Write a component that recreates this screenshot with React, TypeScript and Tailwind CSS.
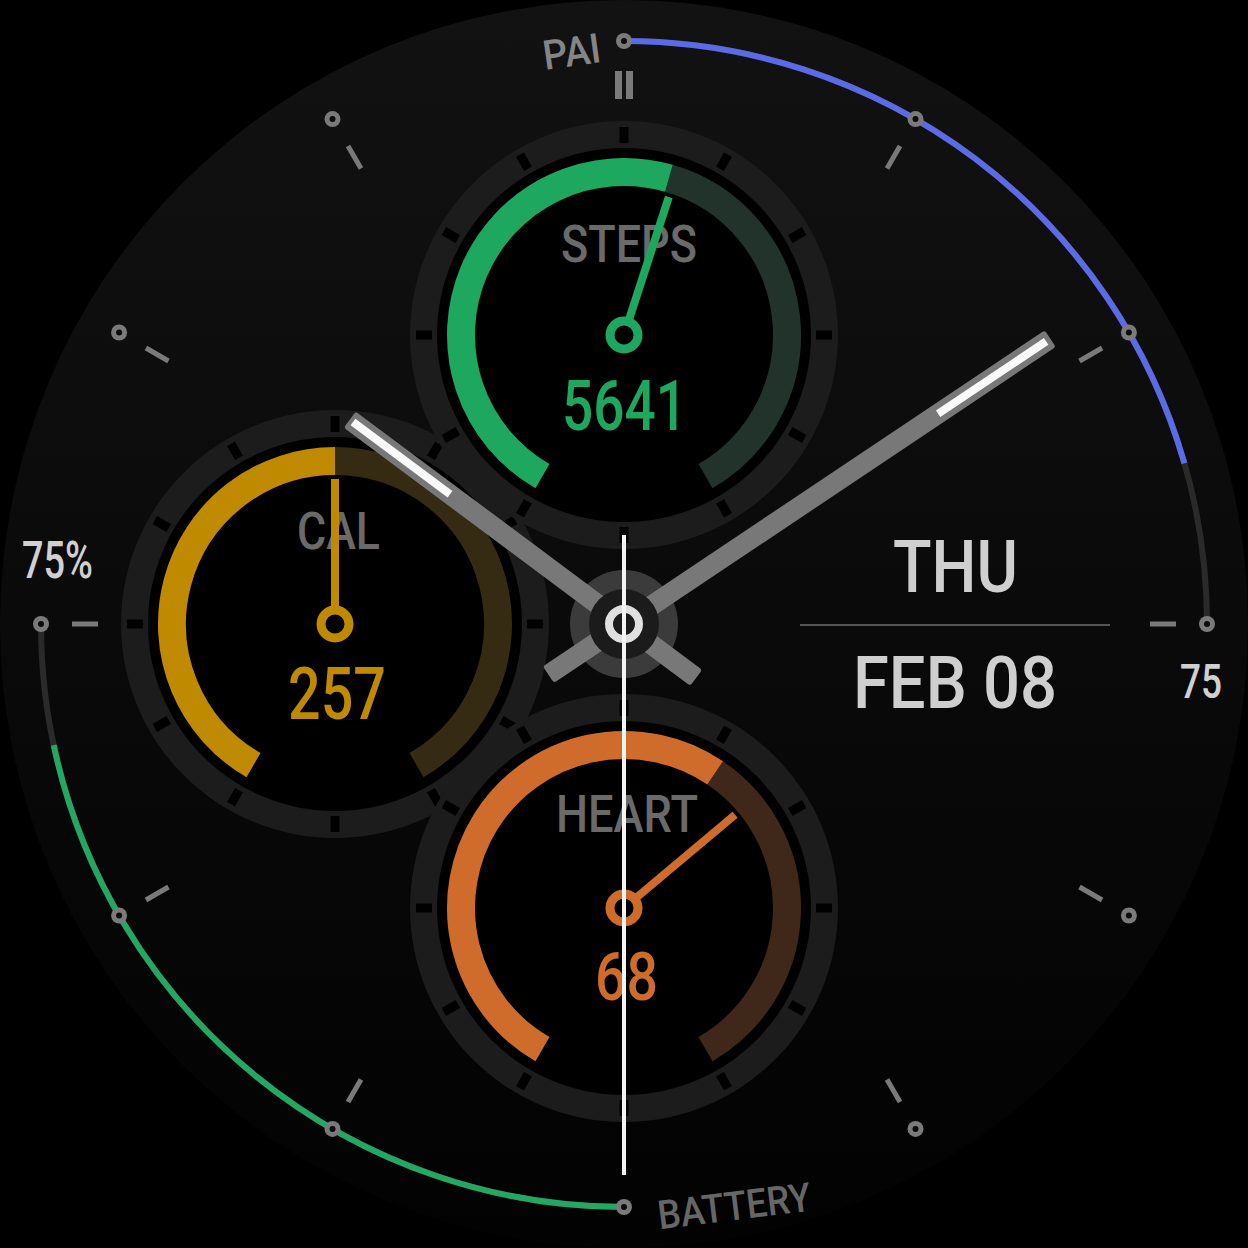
import React from "react";

const C = 624;
const FONT = "Roboto, 'Liberation Sans', sans-serif";

function pt(cx: number, cy: number, r: number, a: number): [number, number] {
  const t = (a * Math.PI) / 180;
  return [cx + r * Math.sin(t), cy - r * Math.cos(t)];
}

// clockwise arc from a1 to a2 (degrees from 12 o'clock)
function arc(cx: number, cy: number, r: number, a1: number, a2: number) {
  const [x1, y1] = pt(cx, cy, r, a1);
  const [x2, y2] = pt(cx, cy, r, a2);
  const large = a2 - a1 > 180 ? 1 : 0;
  return `M${x1} ${y1} A${r} ${r} 0 ${large} 1 ${x2} ${y2}`;
}

type SubdialProps = {
  cx: number;
  cy: number;
  fillTo: number;
  needle: number;
  color: string;
  track: string;
  label: string;
  labelX: number;
  labelY: number;
  labelW: number;
  value: string;
  valueX: number;
  valueY: number;
  valueW: number;
  valueSize: number;
};

function Bezel({ cx, cy }: { cx: number; cy: number }) {
  return (
    <g>
      <circle cx={cx} cy={cy} r={214} fill="#1c1c1c" />
      {Array.from({ length: 12 }).map((_, i) => (
        <rect
          key={i}
          x={cx - 4.5}
          y={cy - 208}
          width={9}
          height={16}
          fill="#000"
          transform={`rotate(${i * 30} ${cx} ${cy})`}
        />
      ))}
    </g>
  );
}

function Subdial(p: SubdialProps) {
  const tip = pt(p.cx, p.cy, 145, p.needle);
  const base = pt(p.cx, p.cy, 14, p.needle);
  return (
    <g>
      <circle cx={p.cx} cy={p.cy} r={187} fill="#000" />
      <path d={arc(p.cx, p.cy, 163, p.fillTo, 510)} stroke={p.track} strokeWidth={28} fill="none" />
      <path d={arc(p.cx, p.cy, 163, 210, p.fillTo)} stroke={p.color} strokeWidth={28} fill="none" />
      <text
        x={p.labelX}
        y={p.labelY}
        textAnchor="middle"
        fontFamily={FONT}
        fontWeight={500}
        fontSize={51}
        fill="#6a6a6a"
        textLength={p.labelW}
        lengthAdjust="spacingAndGlyphs"
      >
        {p.label}
      </text>
      <text
        x={p.valueX}
        y={p.valueY}
        textAnchor="middle"
        fontFamily={FONT}
        fontWeight={500}
        fontSize={p.valueSize}
        fill={p.color}
        textLength={p.valueW}
        lengthAdjust="spacingAndGlyphs"
      >
        {p.value}
      </text>
      <line x1={base[0]} y1={base[1]} x2={tip[0]} y2={tip[1]} stroke={p.color} strokeWidth={8} />
      <circle cx={p.cx} cy={p.cy} r={14} fill="#000" stroke={p.color} strokeWidth={9} />
    </g>
  );
}

export default function App() {
  const dots = Array.from({ length: 12 }).map((_, i) => pt(C, C, 583, i * 30));
  const ticks = [30, 60, 90, 120, 150, 210, 240, 270, 300, 330];

  return (
    <div className="w-[1248px] h-[1248px] bg-black">
      <svg width={1248} height={1248} viewBox="0 0 1248 1248" className="block">
        <defs>
          <linearGradient id="face" x1="0" y1="0" x2="0" y2="1">
            <stop offset="0%" stopColor="#121212" />
            <stop offset="50%" stopColor="#0a0a0a" />
            <stop offset="100%" stopColor="#020202" />
          </linearGradient>
        </defs>
        <circle cx={C} cy={C} r={624} fill="url(#face)" />

        {/* outer progress arcs */}
        <path d={arc(C, C, 583, 0, 90)} stroke="#2a2a2a" strokeWidth={6} fill="none" />
        <path d={arc(C, C, 583, 0, 74)} stroke="#5b6be6" strokeWidth={6} fill="none" />
        <path d={arc(C, C, 583, 180, 270)} stroke="#2a2a2a" strokeWidth={6} fill="none" />
        <path d={arc(C, C, 583, 180, 258)} stroke="#22a862" strokeWidth={6} fill="none" />

        {dots.map(([x, y], i) => (
          <g key={i}>
            <circle cx={x} cy={y} r={8} fill="#7a7a7a" />
            <circle cx={x} cy={y} r={3} fill="#0c0c0c" />
          </g>
        ))}

        {ticks.map((a) => (
          <rect
            key={a}
            x={C - 2.5}
            y={C - 552}
            width={5}
            height={26}
            fill="#7a7a7a"
            transform={`rotate(${a} ${C} ${C})`}
          />
        ))}
        <rect x={615} y={71} width={7} height={28} fill="#7a7a7a" />
        <rect x={626} y={71} width={7} height={28} fill="#7a7a7a" />

        <text
          x={572}
          y={66}
          textAnchor="middle"
          fontFamily={FONT}
          fontWeight={500}
          fontSize={41}
          fill="#858585"
          textLength={58}
          lengthAdjust="spacingAndGlyphs"
          transform="rotate(-8 572 54)"
        >
          PAI
        </text>
        <text
          x={733}
          y={1220}
          textAnchor="middle"
          fontFamily={FONT}
          fontWeight={500}
          fontSize={40}
          fill="#666"
          textLength={154}
          lengthAdjust="spacingAndGlyphs"
          transform="rotate(-7 733 1197)"
        >
          BATTERY
        </text>

        <text x={57.5} y={578} textAnchor="middle" fontFamily={FONT} fontWeight={500} fontSize={51} fill="#d0d0d0" textLength={71} lengthAdjust="spacingAndGlyphs">
          75%
        </text>
        <text x={1201} y={698} textAnchor="middle" fontFamily={FONT} fontWeight={500} fontSize={48} fill="#d0d0d0" textLength={42} lengthAdjust="spacingAndGlyphs">
          75
        </text>

        {/* date */}
        <text x={955.5} y={592} textAnchor="middle" fontFamily={FONT} fontWeight={500} fontSize={73} fill="#cfcfcf" textLength={125} lengthAdjust="spacingAndGlyphs">
          THU
        </text>
        <line x1={800} y1={625} x2={1110} y2={625} stroke="#555" strokeWidth={2} />
        <text x={955} y={708} textAnchor="middle" fontFamily={FONT} fontWeight={500} fontSize={72} fill="#cfcfcf" textLength={204} lengthAdjust="spacingAndGlyphs">
          FEB 08
        </text>

        {/* subdials */}
        <Bezel cx={335} cy={624} />
        <Bezel cx={624} cy={335} />
        <Bezel cx={624} cy={908} />
        <Subdial
          cx={335}
          cy={624}
          fillTo={360}
          needle={0}
          color="#bf8900"
          track="#352a12"
          label="CAL"
          labelX={338.5}
          labelY={549}
          labelW={83}
          value="257"
          valueX={337}
          valueY={719}
          valueW={98}
          valueSize={72}
        />
        <Subdial
          cx={624}
          cy={335}
          fillTo={376}
          needle={18}
          color="#1ea75e"
          track="#21332a"
          label="STEPS"
          labelX={629}
          labelY={262}
          labelW={136}
          value="5641"
          valueX={624.5}
          valueY={430}
          valueW={125}
          valueSize={70}
        />
        <Subdial
          cx={624}
          cy={908}
          fillTo={394}
          needle={50}
          color="#cf6c2c"
          track="#3f2719"
          label="HEART"
          labelX={627}
          labelY={832}
          labelW={142}
          value="68"
          valueX={626.5}
          valueY={1000}
          valueW={63}
          valueSize={66}
        />

        {/* hands */}
        <circle cx={C} cy={C} r={54} fill="#3b3b3b" />
        <g transform={`rotate(306.7 ${C} ${C})`}>
          <rect x={C - 10} y={C - 342} width={20} height={432} rx={3} fill="#787878" />
          <rect x={C - 4} y={C - 338} width={8} height={121} fill="#fafafa" />
        </g>
        <g transform={`rotate(56.2 ${C} ${C})`}>
          <rect x={C - 10} y={C - 513} width={20} height={604} rx={3} fill="#787878" />
          <rect x={C - 4} y={C - 508} width={8} height={130} fill="#fafafa" />
        </g>
        <circle cx={C} cy={C} r={35} fill="#1b1b1b" />
        <circle cx={C} cy={C} r={15} fill="#1b1b1b" stroke="#e0e0e0" strokeWidth={8} />
        <line x1={C} y1={535} x2={C} y2={1175} stroke="#f4f4f4" strokeWidth={4} />
      </svg>
    </div>
  );
}
